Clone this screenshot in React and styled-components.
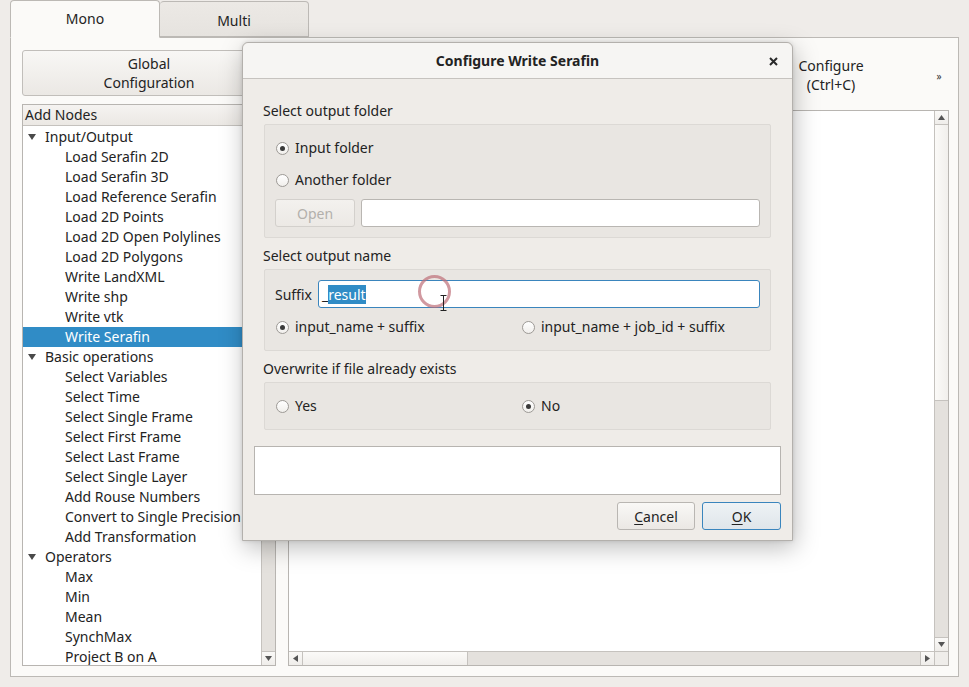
import React from 'react';
import styled, { createGlobalStyle, css } from 'styled-components';

const GlobalStyle = createGlobalStyle`
  html, body {
    margin: 0;
    padding: 0;
    background: #efece9;
  }
  body {
    font-family: "Noto Sans", "DejaVu Sans", sans-serif;
    font-size: 14px;
    color: #232323;
  }
  * {
    box-sizing: border-box;
  }
`;

const Page = styled.div`
  position: relative;
  width: 969px;
  height: 687px;
  overflow: hidden;
  padding-left: 10px;
  background: #efece9;
`;

const TabBar = styled.div`
  display: flex;
  align-items: flex-end;
  height: 38px;
  position: relative;
  z-index: 1;
  margin-bottom: -1px;
`;

const Tab = styled.div`
  width: ${(p) => p.$width}px;
  display: flex;
  align-items: center;
  justify-content: center;
  border: 1px solid #bcb9b5;
  border-radius: 4px 4px 0 0;
  ${(p) =>
    p.$active
      ? css`
          height: 38px;
          background: #fbfaf8;
          border-bottom-color: #fbfaf8;
          padding-bottom: 1px;
        `
      : css`
          height: 36px;
          margin-bottom: 1px;
          border-left: none;
          background: linear-gradient(#ece9e5, #e6e3df);
          padding-top: 2px;
        `}
`;

const Pane = styled.div`
  width: 949px;
  height: 640px;
  border: 1px solid #bcb9b5;
  background: #fbfaf8;
  padding: 12px 9px 10px 11px;
  display: flex;
  flex-direction: column;
`;

const Toolbar = styled.div`
  height: 46px;
  margin-bottom: 8px;
  display: flex;
  align-items: stretch;
`;

const ToolButton = styled.div`
  width: 254px;
  border: 1px solid #c1beba;
  border-radius: 3px;
  background: linear-gradient(#f8f7f5, #ebe8e4);
  display: flex;
  align-items: center;
  justify-content: center;
  text-align: center;
  line-height: 19px;
`;

const Spacer = styled.div`
  flex: 1;
`;

const FlatToolButton = styled.div`
  width: 80px;
  display: flex;
  align-items: center;
  justify-content: center;
  text-align: center;
  line-height: 19px;
  padding-top: 4px;
  margin-right: 58px;
`;

const Extension = styled.div`
  width: 20px;
  display: flex;
  align-items: center;
  justify-content: center;
  font-size: 10px;
  color: #333;
  padding-top: 6px;
`;

const Splitter = styled.div`
  flex: 1;
  display: flex;
  gap: 12px;
  min-height: 0;
`;

const Tree = styled.div`
  width: 254px;
  border: 1px solid #b8b5b1;
  background: #fff;
  display: flex;
  flex-direction: column;
`;

const TreeHeader = styled.div`
  height: 21px;
  line-height: 20px;
  padding-left: 2px;
  background: linear-gradient(#f5f3f1, #ebe8e4);
  border-bottom: 1px solid #c5c2be;
`;

const TreeBody = styled.div`
  flex: 1;
  display: flex;
  min-height: 0;
`;

const TreeList = styled.div`
  flex: 1;
  overflow: hidden;
  padding-top: 1px;
`;

const Row = styled.div`
  height: 20px;
  line-height: 20px;
  white-space: nowrap;
  display: flex;
  align-items: center;
  padding-left: ${(p) => (p.$child ? 42 : 5)}px;
  background: ${(p) => (p.$selected ? '#308cc6' : 'transparent')};
  color: ${(p) => (p.$selected ? '#fff' : '#232323')};
`;

const Arrow = styled.span`
  width: 17px;
  display: inline-flex;
  align-items: center;
`;

const VScroll = styled.div`
  width: 14px;
  border-left: 1px solid #c5c2be;
  background: #e4e1dd;
  display: flex;
  flex-direction: column;
`;

const HScroll = styled.div`
  height: 14px;
  border-top: 1px solid #c5c2be;
  background: #e4e1dd;
  display: flex;
`;

const ScrollBtn = styled.div`
  ${(p) => (p.$horizontal ? 'width: 14px; height: 100%;' : 'height: 14px; width: 100%;')}
  flex: none;
  background: linear-gradient(#faf9f7, #efedea);
  display: flex;
  align-items: center;
  justify-content: center;
  ${(p) => p.$edge === 'start' && (p.$horizontal ? 'border-right: 1px solid #c5c2be;' : 'border-bottom: 1px solid #c5c2be;')}
  ${(p) => p.$edge === 'end' && (p.$horizontal ? 'border-left: 1px solid #c5c2be;' : 'border-top: 1px solid #c5c2be;')}
`;

const Thumb = styled.div`
  flex: none;
  ${(p) => (p.$horizontal ? `width: ${p.$size}px;` : `height: ${p.$size}px;`)}
  background: linear-gradient(${(p) => (p.$horizontal ? '#fbfaf8, #f1efec' : '90deg, #fbfaf8, #f1efec')});
  ${(p) => (p.$horizontal ? 'border-right: 1px solid #c5c2be;' : 'border-bottom: 1px solid #c5c2be;')}
`;

const Track = styled.div`
  flex: 1;
`;

const View = styled.div`
  flex: 1;
  margin-top: 6px;
  border: 1px solid #b8b5b1;
  background: #fff;
  display: grid;
  grid-template-columns: 1fr 14px;
  grid-template-rows: 1fr 14px;
`;

const Corner = styled.div`
  background: #efedea;
  border-top: 1px solid #c5c2be;
  border-left: 1px solid #c5c2be;
`;

/* dialog */

const Dialog = styled.div`
  position: absolute;
  left: 242px;
  top: 42px;
  width: 551px;
  height: 499px;
  border: 1px solid #b3b0ac;
  border-radius: 6px 6px 0 0;
  background: #efece8;
  box-shadow: 2px 7px 24px rgba(0, 0, 0, 0.26), 0 0 4px rgba(0, 0, 0, 0.12);
  display: flex;
  flex-direction: column;
  z-index: 5;
`;

const TitleBar = styled.div`
  height: 36px;
  flex: none;
  border-radius: 6px 6px 0 0;
  background: #f6f5f3;
  border-bottom: 1px solid #c6c3bf;
  display: flex;
  align-items: center;
  justify-content: center;
  position: relative;
  font-weight: bold;
`;

const CloseButton = styled.div`
  position: absolute;
  right: 14px;
  top: 14px;
  width: 9px;
  height: 9px;
  display: flex;
`;

const DialogBody = styled.div`
  flex: 1;
  padding: 22px 11px 12px 11px;
  display: flex;
  flex-direction: column;
`;

const Sections = styled.div`
  padding: 0 10px;
  display: flex;
  flex-direction: column;
`;

const SectionLabel = styled.div`
  height: 20px;
  line-height: 20px;
  margin-top: ${(p) => p.$gap || 0}px;
  margin-left: -1px;
`;

const Group = styled.div`
  margin-top: 3px;
  height: ${(p) => p.$height}px;
  background: #e9e6e2;
  border: 1px solid #dcd9d5;
  border-radius: 2px;
  padding: ${(p) => p.$padTop}px 10px 0 10px;
  display: flex;
  flex-direction: column;
`;

const RadioRow = styled.div`
  height: 20px;
  display: grid;
  grid-template-columns: 246px 1fr;
  margin-top: ${(p) => p.$gap || 0}px;
`;

const Radio = styled.label`
  display: flex;
  align-items: center;
  gap: 6px;
  padding-left: 1px;
  line-height: 20px;
`;

const RadioCircle = styled.span`
  width: 13px;
  height: 13px;
  border-radius: 50%;
  border: 1px solid #9d9a96;
  background: linear-gradient(#ffffff, #f1efec);
  display: inline-flex;
  align-items: center;
  justify-content: center;
  &::after {
    content: '';
    width: 5px;
    height: 5px;
    border-radius: 50%;
    background: ${(p) => (p.$checked ? '#3a3a3a' : 'transparent')};
  }
`;

const FieldRow = styled.div`
  display: flex;
  align-items: center;
  gap: ${(p) => p.$gap}px;
  margin-top: ${(p) => p.$mt || 0}px;
`;

const Button = styled.div`
  width: ${(p) => p.$width}px;
  height: 28px;
  flex: none;
  border: 1px solid ${(p) => (p.$default ? '#3a85bd' : p.$disabled ? '#d3d0cc' : '#b9b6b2')};
  border-radius: 3px;
  background: ${(p) =>
    p.$default
      ? 'linear-gradient(#eef2f5, #dfe5ea)'
      : p.$disabled
      ? 'linear-gradient(#f3f1ee, #ece9e5)'
      : 'linear-gradient(#f9f8f6, #ebe8e4)'};
  color: ${(p) => (p.$disabled ? '#b3b0ac' : '#232323')};
  display: flex;
  align-items: center;
  justify-content: center;
  u {
    text-decoration: underline;
    text-underline-offset: 2px;
  }
`;

const TextInput = styled.div`
  flex: 1;
  height: ${(p) => p.$height || 28}px;
  background: #fff;
  border: 1px solid ${(p) => (p.$focused ? '#3a85bd' : '#b9b6b2')};
  border-radius: 3px;
  display: flex;
  align-items: center;
  padding-left: 3px;
  white-space: pre;
`;

const Selected = styled.span`
  background: #308cc6;
  color: #fff;
  line-height: 19px;
`;

const LogBox = styled.div`
  margin-top: 16px;
  height: 49px;
  background: #fff;
  border: 1px solid #b7b4b0;
`;

const ButtonRow = styled.div`
  margin-top: 7px;
  display: flex;
  justify-content: flex-end;
  gap: 7px;
`;

const ClickMark = styled.div`
  position: absolute;
  left: 418px;
  top: 275px;
  width: 33px;
  height: 33px;
  border-radius: 50%;
  border: 3px solid rgba(190, 110, 120, 0.7);
  z-index: 6;
`;

const IBeam = styled.svg`
  position: absolute;
  left: 440px;
  top: 295px;
  z-index: 7;
`;

const Tri = ({ dir = 'down', size = 7, color = '#555' }) => {
  const h = size;
  const pts = {
    down: `0,1 ${h},1 ${h / 2},${h - 1}`,
    up: `0,${h - 1} ${h},${h - 1} ${h / 2},1`,
    left: `${h - 1},0 ${h - 1},${h} 1,${h / 2}`,
    right: `1,0 1,${h} ${h - 1},${h / 2}`,
  }[dir];
  return (
    <svg width={h} height={h} viewBox={`0 0 ${h} ${h}`}>
      <polygon points={pts} fill={color} />
    </svg>
  );
};

const tree = [
  {
    name: 'Input/Output',
    items: [
      'Load Serafin 2D',
      'Load Serafin 3D',
      'Load Reference Serafin',
      'Load 2D Points',
      'Load 2D Open Polylines',
      'Load 2D Polygons',
      'Write LandXML',
      'Write shp',
      'Write vtk',
      'Write Serafin',
    ],
  },
  {
    name: 'Basic operations',
    items: [
      'Select Variables',
      'Select Time',
      'Select Single Frame',
      'Select First Frame',
      'Select Last Frame',
      'Select Single Layer',
      'Add Rouse Numbers',
      'Convert to Single Precision',
      'Add Transformation',
    ],
  },
  {
    name: 'Operators',
    items: ['Max', 'Min', 'Mean', 'SynchMax', 'Project B on A'],
  },
];

function NodeTree() {
  return (
    <Tree>
      <TreeHeader>Add Nodes</TreeHeader>
      <TreeBody>
        <TreeList>
          {tree.map((group) => (
            <React.Fragment key={group.name}>
              <Row>
                <Arrow>
                  <Tri dir="down" size={8} color="#4a4a4a" />
                </Arrow>
                {group.name}
              </Row>
              {group.items.map((item) => (
                <Row key={item} $child $selected={item === 'Write Serafin'}>
                  {item}
                </Row>
              ))}
            </React.Fragment>
          ))}
        </TreeList>
        <VScroll>
          <ScrollBtn $edge="start">
            <Tri dir="up" />
          </ScrollBtn>
          <Thumb $size={120} />
          <Track />
          <ScrollBtn $edge="end">
            <Tri dir="down" />
          </ScrollBtn>
        </VScroll>
      </TreeBody>
    </Tree>
  );
}

function Canvas() {
  return (
    <View>
      <div />
      <VScroll>
        <ScrollBtn $edge="start">
          <Tri dir="up" />
        </ScrollBtn>
        <Thumb $size={276} />
        <Track />
        <ScrollBtn $edge="end">
          <Tri dir="down" />
        </ScrollBtn>
      </VScroll>
      <HScroll>
        <ScrollBtn $horizontal $edge="start">
          <Tri dir="left" />
        </ScrollBtn>
        <Thumb $horizontal $size={165} />
        <Track />
        <ScrollBtn $horizontal $edge="end">
          <Tri dir="right" />
        </ScrollBtn>
      </HScroll>
      <Corner />
    </View>
  );
}

function WriteSerafinDialog() {
  return (
    <Dialog>
      <TitleBar>
        Configure Write Serafin
        <CloseButton>
          <svg width="9" height="9" viewBox="0 0 9 9">
            <path d="M1 1 L8 8 M8 1 L1 8" stroke="#2a2a2a" strokeWidth="2" />
          </svg>
        </CloseButton>
      </TitleBar>
      <DialogBody>
        <Sections>
          <SectionLabel>Select output folder</SectionLabel>
          <Group $height={114} $padTop={13}>
            <RadioRow>
              <Radio>
                <RadioCircle $checked />
                Input folder
              </Radio>
            </RadioRow>
            <RadioRow $gap={12}>
              <Radio>
                <RadioCircle />
                Another folder
              </Radio>
            </RadioRow>
            <FieldRow $gap={6} $mt={9}>
              <Button $width={80} $disabled>
                Open
              </Button>
              <TextInput />
            </FieldRow>
          </Group>

          <SectionLabel $gap={8}>Select output name</SectionLabel>
          <Group $height={82} $padTop={10}>
            <FieldRow $gap={6}>
              <span>Suffix</span>
              <TextInput $focused $height={28}>
                _<Selected>result</Selected>
              </TextInput>
            </FieldRow>
            <RadioRow $gap={9}>
              <Radio>
                <RadioCircle $checked />
                input_name + suffix
              </Radio>
              <Radio>
                <RadioCircle />
                input_name + job_id + suffix
              </Radio>
            </RadioRow>
          </Group>

          <SectionLabel $gap={8}>Overwrite if file already exists</SectionLabel>
          <Group $height={48} $padTop={13}>
            <RadioRow>
              <Radio>
                <RadioCircle />
                Yes
              </Radio>
              <Radio>
                <RadioCircle $checked />
                No
              </Radio>
            </RadioRow>
          </Group>
        </Sections>
        <LogBox />
        <ButtonRow>
          <Button $width={78}>
            <span>
              <u>C</u>ancel
            </span>
          </Button>
          <Button $width={79} $default>
            <span>
              <u>O</u>K
            </span>
          </Button>
        </ButtonRow>
      </DialogBody>
    </Dialog>
  );
}

export default function App() {
  return (
    <Page>
      <GlobalStyle />
      <TabBar>
        <Tab $active $width={150}>
          Mono
        </Tab>
        <Tab $width={149}>Multi</Tab>
      </TabBar>
      <Pane>
        <Toolbar>
          <ToolButton>
            Global
            <br />
            Configuration
          </ToolButton>
          <Spacer />
          <FlatToolButton>
            Configure
            <br />
            (Ctrl+C)
          </FlatToolButton>
          <Extension>»</Extension>
        </Toolbar>
        <Splitter>
          <NodeTree />
          <Canvas />
        </Splitter>
      </Pane>
      <WriteSerafinDialog />
      <ClickMark />
      <IBeam width="7" height="16" viewBox="0 0 7 16">
        <path d="M0.5 0.5 H6.5 M3.5 0.5 V15.5 M0.5 15.5 H6.5" stroke="#222" strokeWidth="1" fill="none" />
      </IBeam>
    </Page>
  );
}
